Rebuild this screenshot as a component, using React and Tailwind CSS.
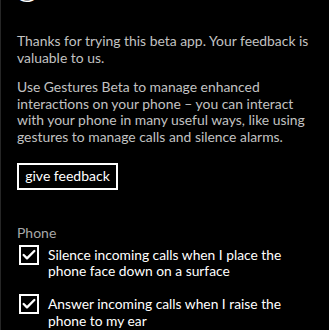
import { Check } from 'lucide-react';

function CheckRow({ children }) {
  return (
    <label className="flex items-start gap-[9px]">
      {/* Checkbox */}
      <span className="mt-[-2px] flex h-[20px] w-[20px] shrink-0 items-center justify-center border-2 border-white">
        <Check className="h-[16px] w-[16px] text-white" strokeWidth={3.5} />
      </span>
      <span className="text-[13.8px] leading-[16.7px] text-white">{children}</span>
    </label>
  );
}

export default function App() {
  return (
    <div
      className="flex h-[330px] w-[329px] flex-col overflow-hidden border-l border-[#262626] bg-black"
      style={{ fontFamily: 'Lato, "Open Sans", sans-serif' }}
    >
      {/* Cut-off page title */}
      <div className="h-[4px] shrink-0 overflow-hidden pl-[16px]">
        <div className="-mt-[40px] text-[40px] font-light leading-none text-white">g</div>
      </div>

      <div className="flex flex-col pl-[16px] pr-[4px] pt-[29px]">
        <p className="text-[13.9px] leading-[16.7px] text-[#c2c2c2]">
          Thanks for trying this beta app. Your feedback is
          <br />
          valuable to us.
        </p>
        <p className="mt-[12.6px] text-[13.9px] leading-[16.7px] text-[#c2c2c2]">
          Use Gestures Beta to manage enhanced
          <br />
          interactions on your phone – you can interact
          <br />
          with your phone in many useful ways, like using
          <br />
          gestures to manage calls and silence alarms.
        </p>

        {/* Give feedback button */}
        <button className="mt-[17px] h-[27px] w-[101px] border-2 border-white text-[14px] leading-none text-white">
          give feedback
        </button>

        {/* Phone settings */}
        <div className="mt-[35px] text-[14px] leading-[16.7px] text-[#a8a8a8]">Phone</div>
        <div className="mt-[5px] flex flex-col gap-[16px] pl-[2px]">
          <CheckRow>
            Silence incoming calls when I place the
            <br />
            phone face down on a surface
          </CheckRow>
          <CheckRow>
            Answer incoming calls when I raise the
            <br />
            phone to my ear
          </CheckRow>
        </div>
      </div>
    </div>
  );
}
